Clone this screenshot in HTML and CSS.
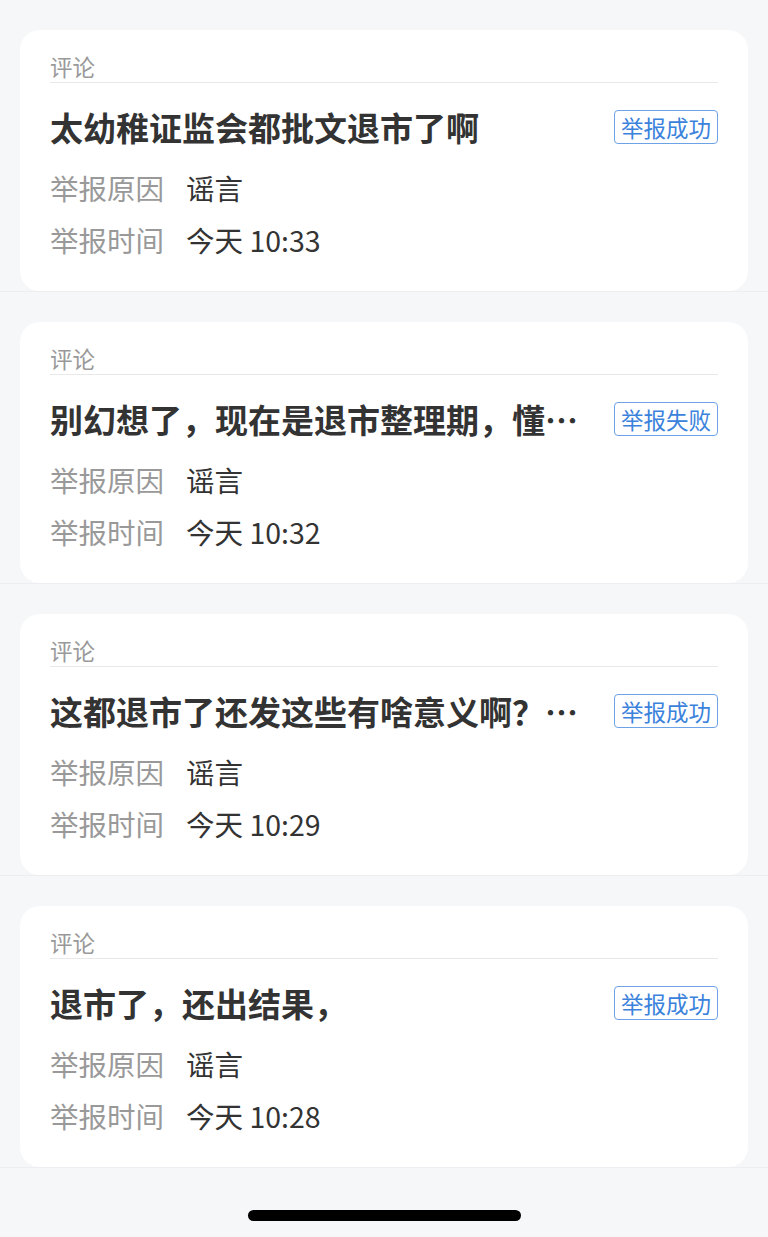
FILE: index.html
```html
<!DOCTYPE html>
<html lang="zh-CN">

<head>
    <meta charset="UTF-8">
    <meta name="viewport" content="width=device-width, initial-scale=1.0">
    <title>我的举报</title>
    <link rel="stylesheet" href="styles.css">
</head>

<body>
    <div class="list">
        <div class="item">
            <div class="card">
                <div class="card-type">评论</div>
                <div class="card-head">
                    <div class="card-title">太幼稚证监会都批文退市了啊</div>
                    <span class="status">举报成功</span>
                </div>
                <div class="row"><span class="row-label">举报原因</span><span class="row-value">谣言</span></div>
                <div class="row"><span class="row-label">举报时间</span><span class="row-value">今天 10:33</span></div>
            </div>
        </div>

        <div class="item">
            <div class="card">
                <div class="card-type">评论</div>
                <div class="card-head">
                    <div class="card-title">别幻想了，现在是退市整理期，懂不懂啊兄弟们</div>
                    <span class="status">举报失败</span>
                </div>
                <div class="row"><span class="row-label">举报原因</span><span class="row-value">谣言</span></div>
                <div class="row"><span class="row-label">举报时间</span><span class="row-value">今天 10:32</span></div>
            </div>
        </div>

        <div class="item">
            <div class="card">
                <div class="card-type">评论</div>
                <div class="card-head">
                    <div class="card-title">这都退市了还发这些有啥意义啊？还有人看吗</div>
                    <span class="status">举报成功</span>
                </div>
                <div class="row"><span class="row-label">举报原因</span><span class="row-value">谣言</span></div>
                <div class="row"><span class="row-label">举报时间</span><span class="row-value">今天 10:29</span></div>
            </div>
        </div>

        <div class="item">
            <div class="card">
                <div class="card-type">评论</div>
                <div class="card-head">
                    <div class="card-title">退市了，还出结果，</div>
                    <span class="status">举报成功</span>
                </div>
                <div class="row"><span class="row-label">举报原因</span><span class="row-value">谣言</span></div>
                <div class="row"><span class="row-label">举报时间</span><span class="row-value">今天 10:28</span></div>
            </div>
        </div>
    </div>

    <div class="home-bar"></div>
</body>

</html>
```

FILE: styles.css
```css
/* 页面 */
body {
    margin: 0;
    min-height: 1237px;
    background-color: #f6f7f9;
    font-family: "PingFang SC", "Noto Sans CJK SC", "Noto Sans", sans-serif;
    color: #333;
}

/* 列表项 */
.item {
    padding: 30px 20px 0 20px;
    border-bottom: 1px solid #eceef2;
}

.card {
    background: #fff;
    border-radius: 20px;
    padding: 20px 30px 25px 30px;
}

.card-type {
    font-size: 22.5px;
    line-height: 32px;
    color: #999;
    border-bottom: 1px solid #e8e8e8;
}

.card-head {
    display: flex;
    align-items: center;
    gap: 24px;
    margin-top: 22px;
    margin-bottom: 13px;
}

.card-title {
    flex: 1;
    min-width: 0;
    font-size: 33px;
    line-height: 44px;
    font-weight: 600;
    color: #333;
    white-space: nowrap;
    overflow: hidden;
    text-overflow: ellipsis;
}

.status {
    flex-shrink: 0;
    font-size: 22.5px;
    line-height: 32px;
    padding: 0 6px;
    border: 1px solid #6ea2e6;
    border-radius: 4px;
    color: #3b82dc;
}

/* 举报信息 */
.row {
    font-size: 28.5px;
    line-height: 52px;
}

.row-label {
    color: #999;
    margin-right: 22px;
}

.row-value {
    color: #333;
}

/* 底部指示条 */
.home-bar {
    width: 273px;
    height: 11px;
    border-radius: 6px;
    background: #000;
    margin: 42px auto 0 auto;
}
```
